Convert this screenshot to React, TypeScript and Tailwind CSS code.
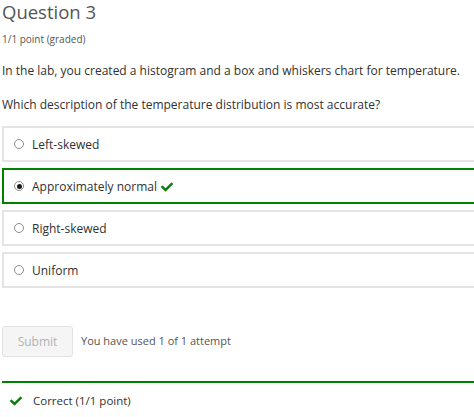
import React from "react";
import { FaCheck } from "react-icons/fa";

const font = { fontFamily: '"Open Sans", "Noto Sans", sans-serif' };

function Radio({ checked }: { checked?: boolean }) {
  return (
    <span className="w-[10px] h-[10px] rounded-full border border-[#8c8c8c] bg-white flex items-center justify-center shrink-0">
      {checked && <span className="w-[5px] h-[5px] rounded-full bg-[#1a1a1a]" />}
    </span>
  );
}

function Option({ label, selected }: { label: string; selected?: boolean }) {
  return (
    <div
      className={`w-[490px] h-[36px] flex items-center pl-[10px] gap-[8px] border-2 ${
        selected ? "border-[#008100]" : "border-[#e4e4e4]"
      }`}
    >
      <Radio checked={selected} />
      <span className="text-[12px] leading-[16px] pt-[2px] text-[#313131] flex items-center gap-[4px]">
        {label}
        {selected && <FaCheck className="text-[#0b7d0b] w-[12px] h-[12px]" />}
      </span>
    </div>
  );
}

export default function App() {
  return (
    <div className="w-[474px] h-[417px] overflow-hidden bg-white" style={font}>
      <div className="pl-[2px]">
        <h2 className="text-[18.5px] leading-[24px] text-[#555]">Question 3</h2>
        <div className="text-[10px] text-[#555] mt-[8px] leading-[14px]">1/1 point (graded)</div>
        <p className="text-[12px] text-[#313131] mt-[17px] leading-[16px] whitespace-nowrap">
          In the lab, you created a histogram and a box and whiskers chart for temperature.
        </p>
        <p className="text-[12px] text-[#313131] mt-[18px] leading-[16px] whitespace-nowrap">
          Which description of the temperature distribution is most accurate?
        </p>
        <div className="mt-[13px] flex flex-col gap-[6px]">
          <Option label="Left-skewed" />
          <Option label="Approximately normal" selected />
          <Option label="Right-skewed" />
          <Option label="Uniform" />
        </div>
        <div className="mt-[38px] flex items-center gap-[8px]">
          <button className="w-[71px] h-[31px] bg-[#f5f5f5] border border-[#e2e2e2] rounded-[3px] text-[12px] text-[#b3b3b3]">
            Submit
          </button>
          <span className="text-[11px] text-[#555]">You have used 1 of 1 attempt</span>
        </div>
        <div className="mt-[24px] w-[490px] border-t-2 border-[#008100] pt-[9px] pl-[8px] flex items-center gap-[11px]">
          <FaCheck className="text-[#0b7d0b] w-[12px] h-[12px]" />
          <span className="text-[11.5px] text-[#313131]">Correct (1/1 point)</span>
        </div>
      </div>
    </div>
  );
}
